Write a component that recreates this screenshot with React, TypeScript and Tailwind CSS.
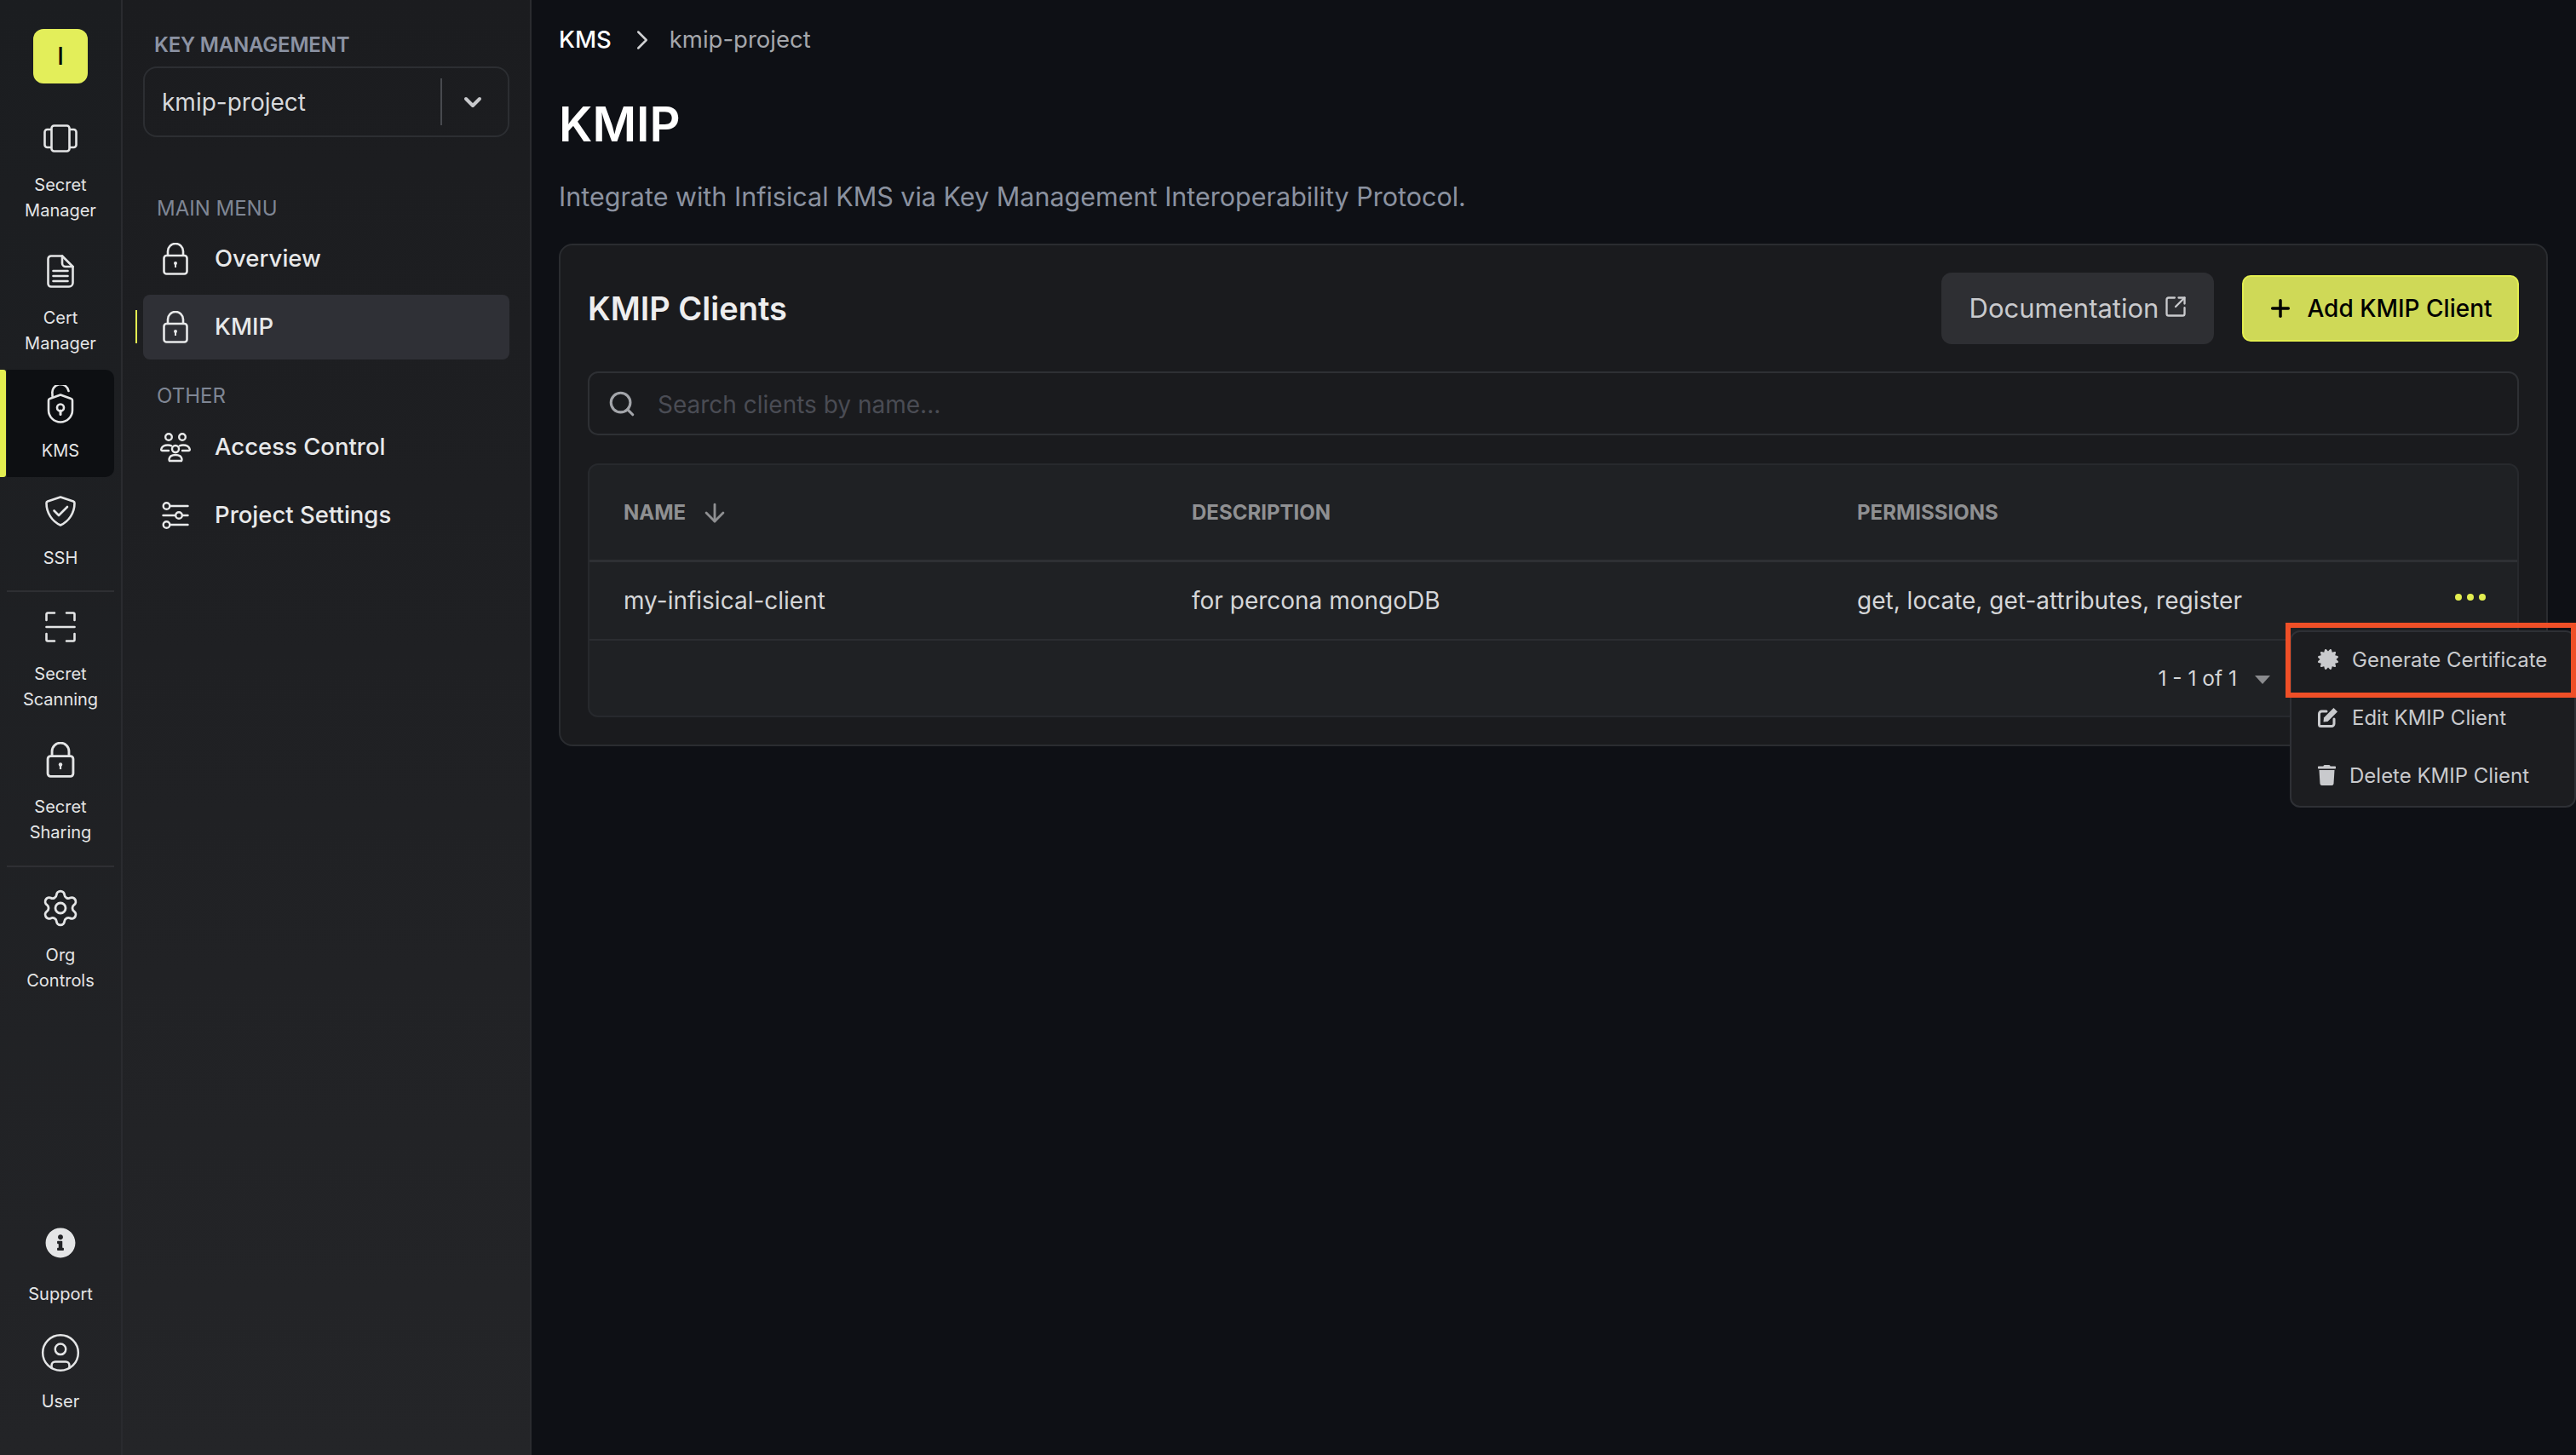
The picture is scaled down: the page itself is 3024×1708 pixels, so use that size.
import { ReactNode } from 'react';
import { ArrowDown, ChevronDown, ChevronRight, CircleUser, Plus, Search, Settings, SquareArrowOutUpRight } from 'lucide-react';
import { FaCertificate, FaInfoCircle, FaTrash } from 'react-icons/fa';

function LockIcon({ className }: { className: string }) {
  return (
    <svg viewBox="0 0 30 38" fill="none" stroke="currentColor" strokeWidth="2.6" className={className}>
      <rect x="1.5" y="15" width="27" height="21.5" rx="3" />
      <path d="M6 15V10a9 9 0 0 1 18 0v5" />
      <circle cx="15" cy="24" r="2" fill="currentColor" stroke="none" />
      <rect x="14" y="24" width="2" height="5" fill="currentColor" stroke="none" />
    </svg>
  );
}

function SecretManagerIcon() {
  return (
    <svg viewBox="0 0 40 33" fill="none" stroke="currentColor" strokeWidth="2.6" strokeLinejoin="round" className="w-[40px] h-[33px]">
      <rect x="9.5" y="1.5" width="21" height="30" rx="3" />
      <path d="M9.5 6H4.5a3 3 0 0 0-3 3v15a3 3 0 0 0 3 3h5M30.5 6h5a3 3 0 0 1 3 3v15a3 3 0 0 1-3 3h-5" />
    </svg>
  );
}

function CertIcon() {
  return (
    <svg viewBox="0 0 32 39" fill="none" stroke="currentColor" strokeWidth="2.6" strokeLinecap="round" strokeLinejoin="round" className="w-[32px] h-[39px]">
      <path d="M5 1.5h13l12.5 12.5v19a4.5 4.500 0 0 1-4.500 4.500H5a3.500 3.500 0 0 1-3.500-3.500V5A3.500 3.500 0 0 1 5 1.500z" />
      <path d="M18 1.500V10a4 4 0 0 0 4 4h8.500" />
      <path d="M7.500 19h17M7.500 25h17M7.500 31h17" />
    </svg>
  );
}

function KmsIcon() {
  return (
    <svg viewBox="0 0 32 45" fill="none" stroke="currentColor" strokeWidth="2.6" strokeLinecap="round" strokeLinejoin="round" className="w-[32px] h-[45px]">
      <path d="M6.500 13V10.500A9.500 9.500 0 0 1 25.500 7" />
      <path d="M16 11.500 28.500 16a2 2 0 0 1 1.500 2v11.500a14 14 0 0 1-28 0V18a2 2 0 0 1 1.500-2z" />
      <circle cx="16" cy="26.500" r="4" />
      <path d="M16 30v4.500" strokeWidth="3" />
    </svg>
  );
}

function ShieldCheckIcon() {
  return (
    <svg viewBox="0 0 36 36" fill="none" stroke="currentColor" strokeWidth="2.6" strokeLinecap="round" strokeLinejoin="round" className="w-[36px] h-[36px]">
      <path d="M18 1.500 33 6.500c1 .4 1.500 1 1.500 2C34.500 20 28 30 18 34.500 8 30 1.500 20 1.500 8.500c0-1 .5-1.600 1.500-2z" />
      <path d="m10.500 17.500 5.500 5.500 10-10" />
    </svg>
  );
}

function ScanIcon() {
  return (
    <svg viewBox="0 0 36 36" fill="none" stroke="currentColor" strokeWidth="2.6" strokeLinecap="round" strokeLinejoin="round" className="w-[36px] h-[36px]">
      <path d="M1.500 10V3a1.500 1.500 0 0 1 1.500-1.500h8M25 1.500h8A1.500 1.500 0 0 1 34.500 3v7M34.500 26v7a1.500 1.500 0 0 1-1.500 1.500h-8M11 34.500H3A1.500 1.500 0 0 1 1.500 33v-7" />
      <path d="M1.500 18h33" />
    </svg>
  );
}

function PeopleIcon() {
  return (
    <svg viewBox="0 0 36 35" fill="none" stroke="currentColor" strokeWidth="2.4" strokeLinecap="round" strokeLinejoin="round" className="w-[36px] h-[35px]">
      <circle cx="10" cy="5" r="3.800" />
      <circle cx="26" cy="5" r="3.800" />
      <circle cx="18" cy="19" r="4" />
      <path d="M11 33a3 3 0 0 1-.5-2c.5-3.500 3.500-5 7.500-5s7 1.500 7.500 5a3 3 0 0 1-.5 2z" />
      <path d="M10 21H2.500c-1.500 0-1.500-1.500-1-2.500 1-2.500 4-4 7.500-4 1.500 0 3 .2 4 .8" />
      <path d="M26 21h7.500c1.500 0 1.500-1.500 1-2.500-1-2.500-4-4-7.500-4-1.500 0-3 .2-4 .8" />
    </svg>
  );
}

function SlidersIcon() {
  return (
    <svg viewBox="0 0 32 32" fill="none" stroke="currentColor" strokeWidth="2.4" strokeLinecap="round" className="w-[32px] h-[32px]">
      <circle cx="5.500" cy="5" r="3.800" />
      <path d="M9.500 5h21" />
      <circle cx="20" cy="16" r="3.800" />
      <path d="M1.500 16H16M24 16h6.500" />
      <circle cx="5.500" cy="27" r="3.800" />
      <path d="M9.500 27h21" />
    </svg>
  );
}

function EditIcon() {
  return (
    <svg viewBox="0 0 24 24" className="w-[24px] h-[24px]">
      <path d="M10 5H4.500A3 3 0 0 0 1.500 8v12.500a2 2 0 0 0 2 2H16a3 3 0 0 0 3-3V14" fill="none" stroke="currentColor" strokeWidth="3" strokeLinecap="round" />
      <path d="M18.500 1 23 5.500 11.500 17l-5 .5.5-5z" fill="currentColor" />
    </svg>
  );
}

function RailItem({ icon, children, active }: { icon: ReactNode; children: ReactNode; active?: boolean }) {
  return (
    <div className={active ? 'relative mx-[8px] bg-[#0d0f12] rounded-r-[10px] pt-[16px] pb-[16px]' : 'mx-[8px] pt-[16px] pb-[16px]'}>
      {active && <div className="absolute left-[-8px] top-0 bottom-0 w-[7px] bg-[#e3ee50] rounded-r-[3px]" />}
      <div className="h-[48px] flex items-center justify-center text-[#e4e5e6]">{icon}</div>
      <div className="mt-[16px] text-center text-[20px] leading-[30px] text-[#e4e5e6] whitespace-pre-line">{children}</div>
    </div>
  );
}

function MenuRow({ icon, label, active }: { icon: ReactNode; label: string; active?: boolean }) {
  return (
    <div className={active ? 'relative h-[76px] mx-[24px] flex items-center rounded-[8px] bg-[#2f3036]' : 'h-[76px] mx-[24px] flex items-center'}>
      {active && <div className="absolute left-[-9px] top-[18px] h-[39px] w-[2px] bg-[#e3ee50]" />}
      <div className="w-[76px] flex justify-center text-[#e8e9ea]">{icon}</div>
      <span className="ml-[8px] text-[27.5px] font-medium text-[#e8e9ea]">{label}</span>
    </div>
  );
}

function DropItem({ icon, label }: { icon: ReactNode; label: string }) {
  return (
    <div className="h-[64px] pl-[31px] flex items-center gap-[16px] text-[#c9cacd]">
      {icon}
      <span className="pt-[1px] text-[24px] whitespace-nowrap">{label}</span>
    </div>
  );
}

export default function App() {
  return (
    <div className="relative flex w-full h-[1708px] overflow-hidden bg-[#0e1015] font-['Inter',sans-serif]">
      {/* icon rail */}
      <aside className="w-[144px] shrink-0 flex flex-col border-r-2 border-[#2a2b2f] bg-linear-to-b from-[#1b1d20] to-[#232427]">
        <div className="mt-[34px] ml-[39px] w-[64px] h-[64px] rounded-[12px] bg-[#e3ee5a] flex items-center justify-center text-[28px] font-medium text-black">I</div>
        <div className="mt-[24px]">
          <RailItem icon={<SecretManagerIcon />}>{'Secret\nManager'}</RailItem>
          <RailItem icon={<CertIcon />}>{'Cert\nManager'}</RailItem>
          <RailItem active icon={<KmsIcon />}>KMS</RailItem>
          <RailItem icon={<ShieldCheckIcon />}>SSH</RailItem>
          <div className="mx-[8px] mt-[7px] mb-[1px] h-[2px] bg-[#2e2f33]" />
          <RailItem icon={<ScanIcon />}>{'Secret\nScanning'}</RailItem>
          <RailItem icon={<LockIcon className="w-[34px] h-[42px]" />}>{'Secret\nSharing'}</RailItem>
          <div className="mx-[8px] my-[8px] h-[2px] bg-[#2e2f33]" />
          <RailItem icon={<Settings className="w-[48px] h-[48px]" strokeWidth={1.4} />}>{'Org\nControls'}</RailItem>
        </div>
        <div className="mt-auto mb-[48px] text-[#e4e5e6] text-center text-[20px] leading-[30px]">
          <div className="h-[48px] flex items-center justify-center"><FaInfoCircle className="w-[36px] h-[36px]" /></div>
          <div className="mt-[21px]">Support</div>
          <div className="mt-[30px] h-[48px] flex items-center justify-center"><CircleUser className="w-[50px] h-[50px]" strokeWidth={1.2} /></div>
          <div className="mt-[18px]">User</div>
        </div>
      </aside>

      {/* project sidebar */}
      <aside className="w-[480px] shrink-0 border-r-2 border-[#2a2b2f] bg-linear-to-b from-[#1b1c1f] to-[#242528]">
        <div className="mt-[39px] ml-[37px] text-[24px] leading-[28px] font-semibold tracking-[-0.2px] text-[#8c93a3] uppercase">Key Management</div>
        <div className="mt-[11px] mx-[24px] h-[83px] flex items-center rounded-[16px] border-2 border-[#2c2e32]">
          <span className="ml-[20px] flex-1 text-[28px] text-[#d8d9dc]">kmip-project</span>
          <div className="w-[2px] h-[55px] bg-[#47494e]" />
          <div className="w-[77px] flex justify-center pr-[5px]"><ChevronDown className="w-[32px] h-[32px] text-[#c8c9cc]" strokeWidth={3} /></div>
        </div>
        <div className="mt-[67px] ml-[40px] text-[24px] leading-[34px] text-[#7f8694] uppercase">Main Menu</div>
        <div className="mt-[4px] flex flex-col gap-[4px]">
          <MenuRow icon={<LockIcon className="w-[30px] h-[38px]" />} label="Overview" />
          <MenuRow active icon={<LockIcon className="w-[30px] h-[38px]" />} label="KMIP" />
        </div>
        <div className="mt-[26px] ml-[40px] text-[24px] leading-[34px] text-[#7f8694] uppercase">Other</div>
        <div className="mt-[5px] flex flex-col gap-[4px]">
          <MenuRow icon={<PeopleIcon />} label="Access Control" />
          <MenuRow icon={<SlidersIcon />} label="Project Settings" />
        </div>
      </aside>

      {/* main */}
      <main className="flex-1 min-w-0 pl-[32px] pr-[33px] pt-[27px]">
        <div className="h-[40px] flex items-center text-[27.5px]">
          <span className="font-medium text-white">KMS</span>
          <ChevronRight className="ml-[17px] w-[38px] h-[38px] text-[#d0d1d3]" strokeWidth={1.6} />
          <span className="ml-[13px] text-[#a5a7ac]">kmip-project</span>
        </div>
        <h1 className="mt-[43px] text-[56px] leading-[72px] font-semibold text-white">KMIP</h1>
        <p className="mt-[27px] text-[30.5px] leading-[44px] text-[#8b92a0]">Integrate with Infisical KMS via Key Management Interoperability Protocol.</p>

        <section className="mt-[33px] rounded-[16px] border-2 border-[#2a2c30] bg-[#1a1b1e] px-[32px] pt-[32px] pb-[32px]">
          <div className="h-[84px] flex items-center">
            <h2 className="flex-1 text-[38px] font-semibold text-[#eeeeef]">KMIP Clients</h2>
            <button className="h-[84px] w-[320px] pl-[2px] flex items-center justify-center gap-[6px] rounded-[12px] bg-[#2e2f33] text-[31px] text-[#c9cacd]">
              Documentation
              <SquareArrowOutUpRight className="w-[28px] h-[28px] -mt-[4px]" strokeWidth={2} />
            </button>
            <button className="ml-[33px] h-[78px] w-[325px] pr-[2px] flex items-center justify-center gap-[15px] rounded-[10px] border-2 border-[#e3ee50] bg-[#cfd957] text-[28px] font-medium text-black">
              <Plus className="w-[32px] h-[32px]" strokeWidth={2.6} />
              Add KMIP Client
            </button>
          </div>

          <div className="mt-[32px] h-[75px] flex items-center rounded-[12px] border-2 border-[#2e3034]">
            <Search className="ml-[21px] w-[34px] h-[34px] text-[#a3a5aa]" strokeWidth={2.2} />
            <span className="ml-[25px] pt-[2px] text-[28px] text-[#4a4c54]">Search clients by name...</span>
          </div>

          <div className="mt-[33px] rounded-[12px] border-2 border-[#27292d] bg-[#1f2124]">
            <div className="h-[114px] pt-[1px] grid grid-cols-[667px_781px_1fr] items-center border-b-[3px] border-[#2e3034] text-[24px] font-bold text-[#8f9092] uppercase">
              <div className="pl-[40px] flex items-center gap-[17px]">
                Name
                <ArrowDown className="w-[34px] h-[34px]" strokeWidth={2} />
              </div>
              <div className="pl-[40px]">Description</div>
              <div className="pl-[40px]">Permissions</div>
            </div>
            <div className="h-[92px] grid grid-cols-[667px_781px_1fr_auto] items-center border-b-2 border-[#2b2d31] text-[28px] text-[#d5d6d8]">
              <div className="pl-[40px]">my-infisical-client</div>
              <div className="pl-[40px]">for percona mongoDB</div>
              <div className="pl-[40px]">get, locate, get-attributes, register</div>
              <div className="pr-[37px] -mt-[8px] flex gap-[6px]">
                <span className="w-[8px] h-[8px] rounded-full bg-[#e3ee50]" />
                <span className="w-[8px] h-[8px] rounded-full bg-[#e3ee50]" />
                <span className="w-[8px] h-[8px] rounded-full bg-[#e3ee50]" />
              </div>
            </div>
            <div className="h-[88px] flex items-center justify-end pr-[290px] text-[24.5px] text-[#d5d6d8]">
              <span>1 - 1 of 1</span>
              <svg viewBox="0 0 18 10" className="ml-[21px] mt-[3px] w-[18px] h-[10px] text-[#8a8b8e]">
                <path d="M0 0h18L9 10z" fill="currentColor" />
              </svg>
            </div>
          </div>
        </section>
      </main>

      {/* row actions menu */}
      <div className="absolute left-[2688px] top-[740px] w-[336px] h-[208px] rounded-[12px] border-2 border-[#2e3035] bg-[#1c1d20] flex flex-col gap-[4px]">
        <DropItem icon={<FaCertificate className="w-[24px] h-[24px]" />} label="Generate Certificate" />
        <DropItem icon={<EditIcon />} label="Edit KMIP Client" />
        <DropItem icon={<FaTrash className="w-[21px] h-[24px]" />} label="Delete KMIP Client" />
      </div>
      {/* annotation box */}
      <div className="absolute left-[2683px] top-[731px] w-[341px] h-[88px] border-[6px] border-[#ef4f27]" />
    </div>
  );
}
